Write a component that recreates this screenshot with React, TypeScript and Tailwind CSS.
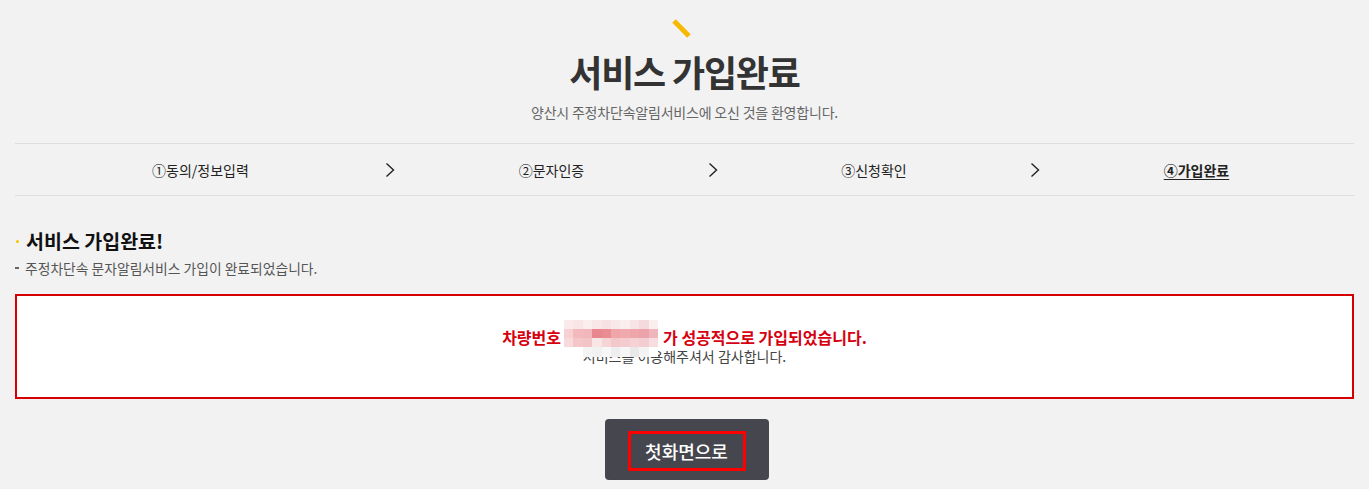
import React from 'react';

const steps = [
  { label: '①동의/정보입력', active: false },
  { label: '②문자인증', active: false },
  { label: '③신청확인', active: false },
  { label: '④가입완료', active: true },
];

// pixelated mask over the car number
const mosaic = [
  ['#fbeaeb', '#f9e4e6', '#fbeeef', '#f8e6e8', '#f7e1e3', '#f9e8e9', '#fbeeef', '#f8e4e6', '#f5dadd', '#fbeeef'],
  ['#f6d0d3', '#f3b9bd', '#f1b7bb', '#e9878f', '#ea8c93', '#efa5a9', '#f0aaae', '#eea6aa', '#eca2aa', '#efb5bd'],
  ['#f8dadc', '#f4c6c9', '#f2c4c6', '#f8e5e6', '#f6d5d7', '#f3c8ca', '#f4cccf', '#f5d2d4', '#f3cdd1', '#f7dde0'],
  ['#ffffff', '#ffffff', '#f4f4f4', '#f1f1f1', '#f7f7f7', '#eeeeee', '#f6f6f6', '#e9e9e9', '#f3f3f3', '#ffffff'],
];

const Chevron = () => (
  <svg width="10" height="16" viewBox="0 0 10 16" className="mx-auto translate-x-[-1px]">
    <polyline points="1.5,1.5 8.5,8 1.5,14.5" fill="none" stroke="#222" strokeWidth="1.4" />
  </svg>
);

export default function App() {
  return (
    <div className="min-h-screen bg-[#f2f2f2] px-[15px] pt-[18px] font-['Malgun_Gothic','Noto_Sans_CJK_KR',sans-serif]">
      {/* Title */}
      <div className="flex h-[20px] items-center justify-center">
        <span className="block h-[5px] w-[21px] translate-x-[-3px] rotate-45 bg-[#f7b900]" />
      </div>
      <h1 className="mt-[11px] text-center text-[36px] font-bold leading-[44px] tracking-[-1.2px] text-[#333]">
        서비스 가입완료
      </h1>
      <p className="mt-[9px] text-center text-[14px] leading-[20px] tracking-[-0.2px] text-[#666]">
        양산시 주정차단속알림서비스에 오신 것을 환영합니다.
      </p>

      {/* Steps */}
      <div className="mt-[21px] grid h-[53px] grid-cols-[371px_8px_315px_8px_314px_8px_1fr] items-center border-y border-[#dedede]">
        {steps.map((s, i) => (
          <React.Fragment key={s.label}>
            {i > 0 && <Chevron />}
            <span
              className={`text-center text-[14px] leading-[20px] text-[#222] ${
                s.active ? 'font-bold underline underline-offset-[3px]' : ''
              }`}
            >
              {s.label}
            </span>
          </React.Fragment>
        ))}
      </div>

      {/* Result */}
      <div className="mt-[32px] flex items-center gap-[7px] pl-[1px]">
        <span className="h-[3px] w-[3px] rounded-full bg-[#f5c400]" />
        <h2 className="text-[19.5px] font-bold leading-[26px] text-[#111]">서비스 가입완료!</h2>
      </div>
      <p className="mt-[5px] flex items-center gap-[6px] text-[13.8px] leading-[18px] text-[#555]">
        <span className="h-[2px] w-[4px] bg-[#666]" />
        주정차단속 문자알림서비스 가입이 완료되었습니다.
      </p>

      <div className="mt-[17px] h-[105px] border-2 border-[#d60000] bg-white pt-[30px] text-center">
        <p className="text-[16px] font-bold leading-[22px] text-[#d6000f]">
          차량번호
          <span className="relative mx-[3px] inline-block h-[10px] w-[96px] align-middle">
            <span className="absolute left-0 top-[-15px] z-10 grid h-[37px] w-[94px] grid-cols-10 grid-rows-4">
              {mosaic.flatMap((row, r) =>
                row.map((c, k) => <span key={`${r}-${k}`} style={{ backgroundColor: c }} />)
              )}
            </span>
          </span>
          가 성공적으로 가입되었습니다.
        </p>
        <p className="text-[14px] leading-[16px] text-[#444]">서비스를 이용해주셔서 감사합니다.</p>
      </div>

      <div className="mt-[20px] flex justify-center">
        <button className="translate-x-[2px] rounded-[4px] bg-[#46464e] px-[23px] pb-[9px] pt-[12px]">
          <span className="flex h-[40px] w-[118px] items-center justify-center border-[3px] border-[#ff0000] text-[18px] font-medium text-white">
            첫화면으로
          </span>
        </button>
      </div>
    </div>
  );
}
